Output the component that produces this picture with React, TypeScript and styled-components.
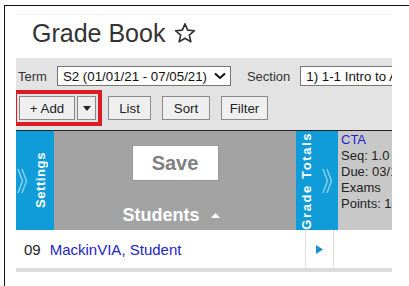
import React from 'react';
import styled, { createGlobalStyle } from 'styled-components';

const GlobalStyle = createGlobalStyle`
  html, body {
    margin: 0;
    padding: 0;
    background: #fff;
    font-family: "Liberation Sans", Arial, sans-serif;
  }
`;

const Frame = styled.div`
  margin: 5px 0 0 4px;
  width: 399px;
  height: 275px;
  border: 1px solid #111;
  padding: 8px 12px 0 11px;
  box-sizing: content-box;
  overflow: hidden;
`;

const Page = styled.div`
  width: 376px;
  display: flex;
  flex-direction: column;
`;

const Header = styled.div`
  height: 44px;
  box-sizing: border-box;
  border-top: 1px solid #f0f0f0;
  display: flex;
  align-items: flex-start;
  padding: 4px 0 0 16px;
  gap: 9px;
`;

const Title = styled.h1`
  margin: 0;
  font-size: 25px;
  font-weight: normal;
  color: #333;
  line-height: 28px;
`;

const Star = styled.svg`
  margin-top: 3px;
`;

const Toolbar = styled.div`
  background: #e3e3e3;
  height: 72px;
  padding: 8px 0 0 2px;
  box-sizing: border-box;
  overflow: hidden;
  display: flex;
  flex-direction: column;
  gap: 10px;
`;

const FilterRow = styled.div`
  display: flex;
  align-items: center;
  white-space: nowrap;
  font-size: 13px;
  color: #333;
`;

const FieldLabel = styled.span<{ $gap: number }>`
  margin-right: ${({ $gap }) => $gap}px;
`;

const SelectBox = styled.div<{ $width: number }>`
  flex: none;
  width: ${({ $width }) => $width}px;
  height: 20px;
  box-sizing: border-box;
  border: 1px solid #767676;
  background: #fff;
  display: flex;
  align-items: center;
  justify-content: space-between;
  padding: 0 4px 0 5px;
  font-size: 13.3px;
  color: #111;
  margin-right: 16px;
  overflow: hidden;
`;

const ButtonRow = styled.div`
  display: flex;
  align-items: center;
  padding-left: 1px;
`;

const AddGroup = styled.div`
  display: flex;
  gap: 2px;
  outline: 4px solid #dc1c24;
  outline-offset: 2px;
  margin-right: 12px;
`;

const Button = styled.div<{ $width: number }>`
  width: ${({ $width }) => $width}px;
  height: 24px;
  box-sizing: border-box;
  border: 1px solid #8a8a8a;
  background: #efefef;
  display: flex;
  align-items: center;
  justify-content: center;
  font-size: 13.3px;
  color: #222;
  margin-right: 11px;
`;

const GroupButton = styled(Button)`
  margin-right: 0;
`;

const Grid = styled.div`
  display: flex;
  height: 99px;
  border-top: 1px solid #222;
`;

const SideTab = styled.div<{ $width: number }>`
  width: ${({ $width }) => $width}px;
  flex: none;
  background: #109cd8;
  display: flex;
  align-items: center;
`;

const SideText = styled.div<{ $indent: number; $spacing: number }>`
  writing-mode: vertical-rl;
  transform: rotate(180deg);
  margin-left: ${({ $indent }) => $indent}px;
  letter-spacing: ${({ $spacing }) => $spacing}px;
  color: #fff;
  font-weight: bold;
  font-size: 13px;
`;

const StudentsHead = styled.div`
  flex: 1;
  background: #a3a3a3;
  display: flex;
  flex-direction: column;
  align-items: center;
  padding-top: 14px;
`;

const SaveButton = styled.div`
  width: 87px;
  height: 36px;
  box-sizing: border-box;
  background: #fff;
  border: 1px solid #999;
  display: flex;
  align-items: center;
  justify-content: center;
  font-size: 20px;
  font-weight: bold;
  color: #808080;
`;

const StudentsLabel = styled.div`
  margin-top: 24px;
  color: #fff;
  font-weight: bold;
  font-size: 18px;
  display: flex;
  align-items: center;
  gap: 11px;
  padding-right: 8px;
`;

const AssignmentCol = styled.div`
  width: 54px;
  flex: none;
  background: #c8c8c8;
  padding: 1px 0 0 3px;
  box-sizing: border-box;
  font-size: 13px;
  line-height: 16px;
  color: #222;
  white-space: nowrap;
  overflow: hidden;
`;

const AssignLink = styled.div`
  color: #2020d0;
`;

const StudentRow = styled.div`
  display: flex;
  height: 38px;
`;

const NameCell = styled.div`
  width: 289px;
  display: flex;
  align-items: center;
  font-size: 15px;
  padding-left: 8px;
  box-sizing: border-box;
  color: #222;
`;

const Num = styled.span`
  margin-right: 9px;
`;

const StudentLink = styled.span`
  color: #2424c8;
`;

const ArrowCell = styled.div`
  width: 29px;
  border-left: 1px solid #e0e0e0;
  border-right: 1px solid #e0e0e0;
  box-sizing: border-box;
  display: flex;
  align-items: center;
  justify-content: center;
`;

const BottomBar = styled.div`
  height: 4px;
  background: #dcdcdc;
`;

const ChevronSvg = styled.svg<{ $offset: number }>`
  flex: none;
  margin-left: ${({ $offset }) => $offset}px;
`;

const Chevrons = ({ offset }: { offset: number }) => (
  <ChevronSvg $offset={offset} width="11" height="26" viewBox="0 0 11 26">
    <polyline points="1,1 5.5,13 1,25" fill="none" stroke="#8dd3f3" strokeWidth="1.4" />
    <polyline points="5,1 9.5,13 5,25" fill="none" stroke="#8dd3f3" strokeWidth="1.4" />
  </ChevronSvg>
);

const App: React.FC = () => {
  return (
    <>
      <GlobalStyle />
      <Frame>
        <Page>
          <Header>
            <Title>Grade Book</Title>
            <Star width="22" height="22" viewBox="0 0 24 24">
              <polygon
                points="12,2 14.9,8.9 22.3,9.5 16.7,14.3 18.4,21.6 12,17.8 5.6,21.6 7.3,14.3 1.7,9.5 9.1,8.9"
                fill="none"
                stroke="#333"
                strokeWidth="1.8"
                strokeLinejoin="round"
              />
            </Star>
          </Header>
          <Toolbar>
            <FilterRow>
              <FieldLabel $gap={10}>Term</FieldLabel>
              <SelectBox $width={174}>
                <span>S2 (01/01/21 - 07/05/21)</span>
                <svg width="12" height="8" viewBox="0 0 12 8">
                  <polyline points="1,1.5 6,6 11,1.5" fill="none" stroke="#111" strokeWidth="2" />
                </svg>
              </SelectBox>
              <FieldLabel $gap={10}>Section</FieldLabel>
              <SelectBox $width={110}>
                <span>1) 1-1 Intro to Art</span>
              </SelectBox>
            </FilterRow>
            <ButtonRow>
              <AddGroup>
                <GroupButton $width={56}>+ Add</GroupButton>
                <GroupButton $width={19}>
                  <svg width="8" height="5" viewBox="0 0 8 5">
                    <polygon points="0,0 8,0 4,5" fill="#222" />
                  </svg>
                </GroupButton>
              </AddGroup>
              <Button $width={43}>List</Button>
              <Button $width={48}>Sort</Button>
              <Button $width={47}>Filter</Button>
            </ButtonRow>
          </Toolbar>
          <Grid>
            <SideTab $width={38}>
              <Chevrons offset={1} />
              <SideText $indent={5} $spacing={0.6}>Settings</SideText>
            </SideTab>
            <StudentsHead>
              <SaveButton>Save</SaveButton>
              <StudentsLabel>
                Students
                <svg width="9" height="5" viewBox="0 0 9 5">
                  <polygon points="0,5 9,5 4.5,0" fill="#fff" />
                </svg>
              </StudentsLabel>
            </StudentsHead>
            <SideTab $width={42}>
              <SideText $indent={3} $spacing={1.6}>Grade Totals</SideText>
              <Chevrons offset={8} />
            </SideTab>
            <AssignmentCol>
              <AssignLink>CTA</AssignLink>
              <div>Seq: 1.0</div>
              <div>Due: 03/15</div>
              <div>Exams</div>
              <div>Points: 100</div>
            </AssignmentCol>
          </Grid>
          <StudentRow>
            <NameCell>
              <Num>09</Num>
              <StudentLink>MackinVIA, Student</StudentLink>
            </NameCell>
            <ArrowCell>
              <svg width="7" height="9" viewBox="0 0 7 9">
                <polygon points="0,0 7,4.5 0,9" fill="#1b8fd2" />
              </svg>
            </ArrowCell>
          </StudentRow>
          <BottomBar />
        </Page>
      </Frame>
    </>
  );
};

export default App;
